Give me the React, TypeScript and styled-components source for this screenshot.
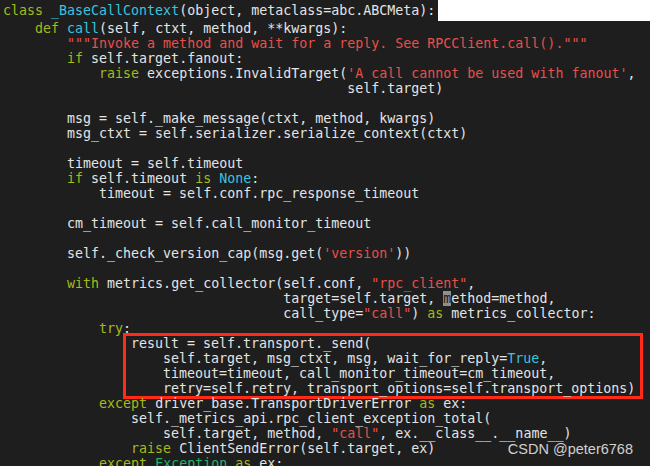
import styled, { createGlobalStyle } from "styled-components";

const GlobalStyle = createGlobalStyle`
  html, body {
    margin: 0;
    padding: 0;
    background: #1e1e1e;
  }
`;

const Screen = styled.div`
  position: relative;
  width: 650px;
  height: 466px;
  overflow: hidden;
  background: #1e1e1e;
`;

const Code = styled.div`
  padding: 2px 0 0 3px;
  font-family: "DejaVu Sans Mono", "Liberation Mono", monospace;
  font-size: 13.3px;
  color: #e4e4e4;
  white-space: pre;
`;

const Line = styled.div<{ $first?: boolean }>`
  height: ${(p) => (p.$first ? "18px" : "15px")};
  line-height: ${(p) => (p.$first ? "18px" : "15px")};
`;

const TopRow = styled.div`
  display: flex;
  align-items: flex-start;
`;

const Blank = styled.div`
  margin-top: -2px;
  width: 212px;
  height: 21px;
  margin-left: auto;
  background: #ffffff;
`;

const Kw = styled.span`
  color: #a3bb1a;
`;

const Name = styled.span`
  color: #3cc3df;
`;

const Str = styled.span`
  color: #e8504a;
`;

const Exc = styled.span`
  color: #24b36b;
`;

const Cursor = styled.span`
  background: #8f8f8f;
  color: #1e1e1e;
`;

const Marked = styled.div`
  margin: -3px 0 -3px 120px;
  width: 509px;
  padding: 0 0 0 5px;
  border: 3px solid #ff2a17;
  box-sizing: content-box;
`;

const Watermark = styled.div`
  position: absolute;
  right: 17px;
  bottom: 9px;
  font-family: "Liberation Sans", Arial, sans-serif;
  font-size: 14.5px;
  color: rgba(235, 235, 235, 0.88);
`;

export default function App() {
  return (
    <>
      <GlobalStyle />
      <Screen>
        <Code>
          <TopRow>
            <Line $first>
              <Kw>class</Kw> <Name>_BaseCallContext</Name>(object, metaclass=abc.ABCMeta):
            </Line>
            <Blank />
          </TopRow>
          <Line>
            {"    "}<Kw>def</Kw> <Name>call</Name>(self, ctxt, method, **kwargs):
          </Line>
          <Line>
            {"        "}<Str>"""Invoke a method and wait for a reply. See RPCClient.call()."""</Str>
          </Line>
          <Line>
            {"        "}<Kw>if</Kw> self.target.fanout:
          </Line>
          <Line>
            {"            "}<Kw>raise</Kw> exceptions.InvalidTarget(<Str>'A call cannot be used with fanout'</Str>,
          </Line>
          <Line>{"                                           self.target)"}</Line>
          <Line />
          <Line>{"        msg = self._make_message(ctxt, method, kwargs)"}</Line>
          <Line>{"        msg_ctxt = self.serializer.serialize_context(ctxt)"}</Line>
          <Line />
          <Line>{"        timeout = self.timeout"}</Line>
          <Line>
            {"        "}<Kw>if</Kw> self.timeout <Kw>is</Kw> <Name>None</Name>:
          </Line>
          <Line>{"            timeout = self.conf.rpc_response_timeout"}</Line>
          <Line />
          <Line>{"        cm_timeout = self.call_monitor_timeout"}</Line>
          <Line />
          <Line>
            {"        self._check_version_cap(msg.get("}<Str>'version'</Str>))
          </Line>
          <Line />
          <Line>
            {"        "}<Kw>with</Kw> metrics.get_collector(self.conf, <Str>"rpc_client"</Str>,
          </Line>
          <Line>
            {"                                   target=self.target, "}<Cursor>m</Cursor>ethod=method,
          </Line>
          <Line>
            {"                                   call_type="}<Str>"call"</Str>) <Kw>as</Kw> metrics_collector:
          </Line>
          <Line>
            {"            "}<Kw>try</Kw>:
          </Line>
          <Marked>
            <Line>{"result = self.transport._send("}</Line>
            <Line>
              {"    self.target, msg_ctxt, msg, wait_for_reply="}<Name>True</Name>,
            </Line>
            <Line>{"    timeout=timeout, call_monitor_timeout=cm_timeout,"}</Line>
            <Line>{"    retry=self.retry, transport_options=self.transport_options)"}</Line>
          </Marked>
          <Line>
            {"            "}<Kw>except</Kw> driver_base.TransportDriverError <Kw>as</Kw> ex:
          </Line>
          <Line>{"                self._metrics_api.rpc_client_exception_total("}</Line>
          <Line>
            {"                    self.target, method, "}<Str>"call"</Str>, ex.__class__.__name__)
          </Line>
          <Line>
            {"                "}<Kw>raise</Kw> ClientSendError(self.target, ex)
          </Line>
          <Line>
            {"            "}<Kw>except</Kw> <Exc>Exception</Exc> <Kw>as</Kw> ex:
          </Line>
        </Code>
        <Watermark>CSDN @peter6768</Watermark>
      </Screen>
    </>
  );
}
